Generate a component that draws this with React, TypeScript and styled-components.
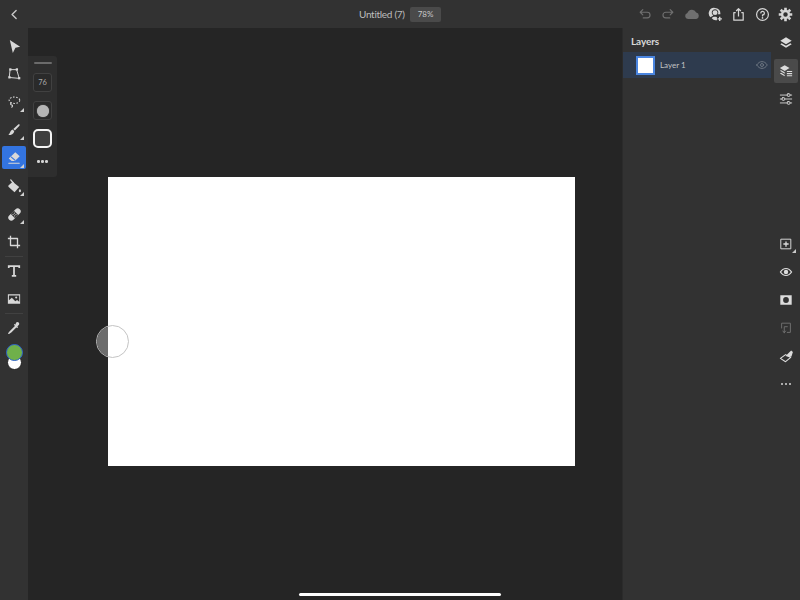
import React from "react";
import styled, { createGlobalStyle } from "styled-components";

const Global = createGlobalStyle`
  html, body { margin: 0; padding: 0; background: #252525; }
  body { font-family: "Lato", "Open Sans", sans-serif; }
  #root { width: 800px; height: 600px; overflow: hidden; }
`;

const Screen = styled.div`
  position: relative;
  width: 800px;
  height: 600px;
  display: flex;
  flex-direction: column;
  overflow: hidden;
  background: #252525;
`;

const TopBar = styled.header`
  height: 28px;
  flex: none;
  display: flex;
  align-items: center;
  background: #323232;
  color: #c8c8c8;
`;

const BackSlot = styled.div`
  width: 28px;
  flex: none;
  display: flex;
  justify-content: center;
  align-items: center;
`;

const TitleGroup = styled.div`
  margin-left: 331px;
  flex: none;
  display: flex;
  align-items: center;
  gap: 6px;
`;

const Title = styled.span`
  font-size: 10px;
  letter-spacing: -0.3px;
  color: #bdbdbd;
  width: 45px;
  white-space: nowrap;
`;

const Zoom = styled.span`
  width: 31px;
  height: 15px;
  background: #4a4a4a;
  border-radius: 2px;
  font-size: 8px;
  line-height: 15px;
  text-align: center;
  color: #c8c8c8;
`;

const TopActions = styled.div`
  margin-left: auto;
  display: flex;
  align-items: center;
  padding-right: 2.5px;
`;

const TopAction = styled.span<{ $dim?: boolean }>`
  width: 23.5px;
  height: 28px;
  display: flex;
  align-items: center;
  justify-content: center;
  color: ${(p) => (p.$dim ? "#6f6f6f" : "#d6d6d6")};
`;

const Body = styled.div`
  flex: 1;
  min-height: 0;
  display: flex;
`;

const LeftRail = styled.nav`
  position: relative;
  z-index: 2;
  width: 28px;
  flex: none;
  box-sizing: border-box;
  padding-top: 4px;
  background: #323232;
  display: flex;
  flex-direction: column;
  align-items: center;
`;

const Tool = styled.button<{ $active?: boolean; $more?: boolean }>`
  position: relative;
  width: 24px;
  height: 28px;
  flex: none;
  padding: 0;
  border: 0;
  background: transparent;
  color: #d8d8d8;
  display: flex;
  align-items: center;
  justify-content: center;

  ${(p) =>
    p.$active &&
    `&::before {
      content: "";
      position: absolute;
      inset: 2px 0 3px 0;
      background: #3374e0;
      border-radius: 2px;
    }`}

  svg { position: relative; }

  ${(p) =>
    p.$more &&
    `&::after {
      content: "";
      position: absolute;
      right: 2px;
      bottom: 4px;
      border-style: solid;
      border-width: 0 0 4px 4px;
      border-color: transparent transparent #d0d0d0 transparent;
    }`}
`;

const RailSep = styled.div`
  width: 18px;
  height: 1px;
  flex: none;
  background: #414141;
`;

const Swatches = styled.div`
  position: relative;
  width: 20px;
  height: 28px;
  margin-top: 2px;
`;

const Swatch = styled.span<{ $color: string; $front?: boolean }>`
  position: absolute;
  left: ${(p) => (p.$front ? 2 : 3)}px;
  top: ${(p) => (p.$front ? 0 : 11)}px;
  box-sizing: border-box;
  width: ${(p) => (p.$front ? 17 : 15)}px;
  height: ${(p) => (p.$front ? 17 : 15)}px;
  border-radius: 50%;
  background: ${(p) => p.$color};
  border: ${(p) => (p.$front ? "1.5px solid #2d62cc" : "1px solid #222")};
  z-index: ${(p) => (p.$front ? 1 : 0)};
`;

const Canvas = styled.main`
  position: relative;
  flex: 1;
  min-width: 0;
  background: #252525;
  box-sizing: border-box;
  padding: 149px 0 0 80px;
`;

const Artboard = styled.div`
  width: 467px;
  height: 289px;
  background: #ffffff;
`;

const FloatPanel = styled.div`
  position: absolute;
  left: 0;
  top: 28px;
  width: 29px;
  height: 121px;
  box-sizing: border-box;
  padding-top: 6px;
  background: #2e2e2e;
  border-radius: 0 3px 3px 0;
  display: flex;
  flex-direction: column;
  align-items: center;
`;

const Handle = styled.span`
  width: 18px;
  height: 2px;
  background: #6b6b6b;
  border-radius: 1px;
`;

const ValueBox = styled.div<{ $top: number }>`
  width: 19px;
  height: 19px;
  margin-top: ${(p) => p.$top}px;
  box-sizing: border-box;
  border: 1px solid #414141;
  border-radius: 3px;
  background: #2a2a2a;
  display: flex;
  align-items: center;
  justify-content: center;
  font-size: 7.5px;
  color: #a8a8a8;
`;

const SoftDot = styled.span`
  width: 12px;
  height: 12px;
  border-radius: 50%;
  background: #b5b5b5;
  box-shadow: 0 0 1px #b5b5b5;
`;

const ShapeBox = styled.div`
  width: 19px;
  height: 19px;
  margin-top: 9px;
  box-sizing: border-box;
  border: 2px solid #f4f4f4;
  border-radius: 5px;
  background: #3f3f3f;
`;

const Dots = styled.div<{ $top: number }>`
  margin-top: ${(p) => p.$top}px;
  display: flex;
  gap: 1.5px;
  span {
    width: 2.5px;
    height: 2.5px;
    border-radius: 50%;
    background: #d4d4d4;
  }
`;

const BrushCursor = styled.div`
  position: absolute;
  left: 68px;
  top: 297px;
  width: 33px;
  height: 33px;
  box-sizing: border-box;
  border-radius: 50%;
  border: 1px solid #c4c4c4;
  overflow: hidden;
  display: flex;
`;

const BrushShade = styled.span`
  width: 11px;
  height: 100%;
  background: #6c6c6c;
`;

const LayersPanel = styled.aside`
  width: 150px;
  flex: none;
  background: #323232;
  border-left: 1px solid #2b2b2b;
  box-sizing: border-box;
  display: flex;
  flex-direction: column;
`;

const PanelTitle = styled.h2`
  margin: 0;
  height: 24px;
  padding-left: 8px;
  font-size: 10px;
  font-weight: 700;
  letter-spacing: -0.1px;
  line-height: 26px;
  color: #d8d8d8;
`;

const LayerRow = styled.div`
  height: 26px;
  margin-right: 1px;
  background: #2e3b4e;
  display: flex;
  align-items: center;
  padding-left: 13px;
  padding-right: 3px;
  color: #c8c8c8;
`;

const Thumb = styled.span`
  width: 19px;
  height: 19px;
  box-sizing: border-box;
  border: 2px solid #4a85e0;
  background: #fff;
  flex: none;
`;

const LayerName = styled.span`
  margin-left: 5px;
  font-size: 8px;
  flex: 1;
  color: #c4c4c4;
`;

const RightRail = styled.nav`
  width: 28px;
  flex: none;
  background: #323232;
  box-sizing: border-box;
  padding-top: 1px;
  display: flex;
  flex-direction: column;
  align-items: center;
`;

const RailBtn = styled.button<{ $active?: boolean; $dim?: boolean; $more?: boolean }>`
  position: relative;
  width: 24px;
  height: 24px;
  margin: 2px 0;
  flex: none;
  padding: 0;
  border: 0;
  border-radius: 2px;
  background: ${(p) => (p.$active ? "#4a4a4a" : "transparent")};
  color: ${(p) => (p.$dim ? "#6f6f6f" : "#dcdcdc")};
  display: flex;
  align-items: center;
  justify-content: center;

  ${(p) =>
    p.$more &&
    `&::after {
      content: "";
      position: absolute;
      right: 2px;
      bottom: 3px;
      border-style: solid;
      border-width: 0 0 4px 4px;
      border-color: transparent transparent #c8c8c8 transparent;
    }`}
`;

const RailGap = styled.div`
  height: 117px;
  flex: none;
`;

const HomeBar = styled.div`
  position: absolute;
  left: 299px;
  bottom: 4px;
  width: 202px;
  height: 3.5px;
  border-radius: 2px;
  background: #fff;
  z-index: 3;
`;

type IP = { s?: number; children: React.ReactNode };
const Ico = ({ s = 14, children }: IP) => (
  <svg width={s} height={s} viewBox="0 0 16 16" fill="none" stroke="currentColor" strokeWidth="1.3" strokeLinecap="round" strokeLinejoin="round">
    {children}
  </svg>
);

const Solid = { fill: "currentColor", stroke: "none" } as const;

export default function App() {
  return (
    <Screen>
      <Global />
      <TopBar>
        <BackSlot>
          <Ico s={13}><path d="M10 3 5 8l5 5" strokeWidth="1.7" /></Ico>
        </BackSlot>
        <TitleGroup>
          <Title>Untitled (7)</Title>
          <Zoom>78%</Zoom>
        </TitleGroup>
        <TopActions>
          <TopAction $dim><Ico><path d="M5.500 3 2.500 6l3 3M3 6h7.500a3 3 0 0 1 0 6.500H6" /></Ico></TopAction>
          <TopAction $dim><Ico><path d="M10.500 3l3 3-3 3M13 6H5.500a3 3 0 0 0 0 6.500H10" /></Ico></TopAction>
          <TopAction $dim>
            <Ico s={16}><path {...Solid} d="M4 13a3 3 0 0 1-.6-5.900A4.800 4.800 0 0 1 12.200 6.400 3.400 3.400 0 0 1 12.300 13z" /></Ico>
          </TopAction>
          <TopAction>
            <Ico s={15}>
              <path {...Solid} fillRule="evenodd" d="M7.500 1a5.700 5.700 0 0 1 5.600 6.700H10.300c.5-.6.700-1.200.7-1.900 0-2-1.500-3.400-3.500-3.400S4 3.800 4 5.800c0 1.200.6 2.200 1.400 2.800v.8c-1.300.4-2.100 1-2.500 1.600A5.700 5.700 0 0 1 7.500 1z" />
              <circle cx="7.500" cy="6" r="2.600" {...Solid} />
              <path d="M12.500 10.500v4.500M10.200 12.700h4.600" strokeWidth="1.500" strokeLinecap="butt" />
              <path {...Solid} d="M4 12c.8-1 2-1.500 3.500-1.500.8 0 1.400.1 2 .4V14A5.500 5.500 0 0 1 4 12z" />
            </Ico>
          </TopAction>
          <TopAction>
            <Ico s={15}><path d="M5 6H3v8h10V6h-2M8 10V2M5.500 4.200 8 1.800l2.500 2.400" strokeLinecap="butt" /></Ico>
          </TopAction>
          <TopAction>
            <Ico s={15}>
              <circle cx="8" cy="8" r="6.300" />
              <path d="M6.200 6.300A1.900 1.900 0 1 1 8 8.500v1" />
              <circle cx="8" cy="11.600" r=".9" {...Solid} />
            </Ico>
          </TopAction>
          <TopAction>
            <Ico s={15}>
              <circle cx="8" cy="8" r="3.700" strokeWidth="2.600" />
              <path strokeWidth="2.800" strokeLinecap="butt" d="M8 .8v2.400M8 12.800v2.400M.8 8h2.400M12.800 8h2.400M2.900 2.900l1.700 1.700M11.400 11.400l1.700 1.700M2.900 13.100l1.700-1.700M11.400 4.600l1.700-1.700" />
            </Ico>
          </TopAction>
        </TopActions>
      </TopBar>

      <Body>
        <LeftRail>
          <Tool><Ico s={15}><path {...Solid} d="M3 1 14 8.200l-5 1.100L6.200 15z" /></Ico></Tool>
          <Tool>
            <Ico s={14}>
              <path d="M4 3h7l3 10-11-1z" strokeWidth="1.100" />
              <rect x="2.500" y="1.500" width="2.600" height="2.600" {...Solid} />
              <rect x="10" y="1.500" width="2.600" height="2.600" {...Solid} />
              <rect x="12.600" y="11.500" width="2.600" height="2.600" {...Solid} />
              <rect x="1.500" y="10.500" width="2.600" height="2.600" {...Solid} />
            </Ico>
          </Tool>
          <Tool $more>
            <Ico s={14}>
              <ellipse cx="8.500" cy="6" rx="6" ry="3.700" strokeDasharray="1.800 1.700" strokeLinecap="butt" />
              <path d="M4.500 9.200c-.8 1.300 0 2.200 1 2.200s1 1.300 0 2.600" />
            </Ico>
          </Tool>
          <Tool $more>
            <Ico s={14}>
              <path {...Solid} d="M14 1.500c.6.400.6 1 .2 1.500L9 8.500 7.200 6.800 12.800 1.700c.4-.4.800-.5 1.200-.2z" />
              <path {...Solid} d="M6.500 7.500 8.300 9.300C7.800 12.200 4.500 14 1.500 13.800 3.500 12.500 3.500 8.500 6.500 7.500z" />
            </Ico>
          </Tool>
          <Tool $active $more>
            <Ico s={14}>
              <path {...Solid} d="M9.500 1.500 14.500 6 9 11.500H5.300L2 8.500z" />
              <path d="M5 7l4 3.500" stroke="#3374e0" />
              <path d="M2 14h12" strokeWidth="1.200" />
            </Ico>
          </Tool>
          <Tool $more>
            <Ico s={15}>
              <path {...Solid} d="M6 3 13 8.500 8 14 1.800 8.500c-.6-.6-.6-1.200 0-1.800z" />
              <path d="M4 1l3 3.500" strokeWidth="1.400" />
              <path {...Solid} d="M13.800 10.500c.7 1 1.200 1.700 1.200 2.400a1.200 1.200 0 0 1-2.400 0c0-.7.500-1.400 1.200-2.400z" />
            </Ico>
          </Tool>
          <Tool $more>
            <Ico s={15}>
              <g transform="rotate(-45 8 8)">
                <rect x="0" y="4.800" width="16" height="6.400" rx="3.200" {...Solid} />
                <rect x="5.600" y="4.800" width="4.800" height="6.400" fill="#323232" stroke="none" />
                <circle cx="7" cy="6.800" r=".6" {...Solid} />
                <circle cx="9" cy="6.800" r=".6" {...Solid} />
                <circle cx="7" cy="9.200" r=".6" {...Solid} />
                <circle cx="9" cy="9.200" r=".6" {...Solid} />
              </g>
            </Ico>
          </Tool>
          <Tool>
            <Ico s={14}><path d="M4 .8V12h11M1 4h11v11" strokeWidth="1.500" strokeLinecap="butt" /></Ico>
          </Tool>
          <RailSep />
          <Tool>
            <Ico s={14}><path d="M2 4.500V2.500h12v2M8 2.500v11M5.500 13.500h5" strokeWidth="2" strokeLinecap="butt" strokeLinejoin="miter" /></Ico>
          </Tool>
          <Tool>
            <Ico s={14}>
              <path {...Solid} fillRule="evenodd" d="M1 2.500h14v11H1zM2.200 4v5.500L5.500 6.500l4 4 2-1.500 2.500 2V4zM10.500 5a1.200 1.200 0 1 1 0 2.400 1.200 1.200 0 0 1 0-2.400z" />
            </Ico>
          </Tool>
          <RailSep />
          <Tool>
            <Ico s={14}>
              <path {...Solid} d="M10.500 1.800c.8-.8 2-.8 2.900 0 .8.900.8 2.100 0 2.900L11.500 6.600 9.400 4.500z" />
              <path d="M8.800 4.300 11.700 7.200M9.800 5.800 3.800 11.800 2 14.200l2.400-1.600 6-6" strokeWidth="1.400" />
            </Ico>
          </Tool>
          <Swatches>
            <Swatch $front $color="#6fb04a" />
            <Swatch $color="#ffffff" />
          </Swatches>
        </LeftRail>

        <Canvas>
          <FloatPanel>
            <Handle />
            <ValueBox $top={9}>76</ValueBox>
            <ValueBox $top={9}><SoftDot /></ValueBox>
            <ShapeBox />
            <Dots $top={12}><span /><span /><span /></Dots>
          </FloatPanel>
          <Artboard />
          <BrushCursor><BrushShade /></BrushCursor>
        </Canvas>

        <LayersPanel>
          <PanelTitle>Layers</PanelTitle>
          <LayerRow>
            <Thumb />
            <LayerName>Layer 1</LayerName>
            <Ico s={12}>
              <g stroke="#6d7682"><path d="M1 8c2-3.200 4.300-4.500 7-4.500S13 4.800 15 8c-2 3.200-4.300 4.500-7 4.500S3 11.200 1 8z" /><circle cx="8" cy="8" r="2" /></g>
            </Ico>
          </LayerRow>
        </LayersPanel>

        <RightRail>
          <RailBtn>
            <Ico s={14}>
              <path {...Solid} d="M8 1.500 14.500 5.500 8 9.500 1.500 5.500z" />
              <path {...Solid} d="M3 8.200 8 11.200l5-3 1.500 1.100L8 13.500 1.500 9.300z" />
            </Ico>
          </RailBtn>
          <RailBtn $active>
            <Ico s={14}>
              <path {...Solid} d="M6.500 1.500 12 4.700 6.500 8 1 4.700z" />
              <path {...Solid} d="M2.500 7 6.500 9.500v1.500L1 7.800zM2.500 10 6.500 12.500v1.500L1 10.800z" />
              <path d="M9 8.500h6M9 11h6M9 13.500h6" strokeWidth="1.200" strokeLinecap="butt" />
            </Ico>
          </RailBtn>
          <RailBtn>
            <Ico s={14}>
              <path d="M1.500 3.500h8M12.500 3.500h2M1.500 8h2M6.500 8h8M1.500 12.500h8M12.500 12.500h2" strokeWidth="1" />
              <rect x="9.500" y="2" width="3" height="3" rx=".8" strokeWidth="1" />
              <rect x="3.500" y="6.500" width="3" height="3" rx=".8" strokeWidth="1" />
              <rect x="9.500" y="11" width="3" height="3" rx=".8" strokeWidth="1" />
            </Ico>
          </RailBtn>
          <RailGap />
          <RailBtn $more>
            <Ico s={14}><rect x="2.500" y="2.500" width="11" height="11" strokeWidth="1.100" /><path d="M8 5v6M5 8h6" strokeWidth="1.500" strokeLinecap="butt" /></Ico>
          </RailBtn>
          <RailBtn>
            <Ico s={14}>
              <path {...Solid} fillRule="evenodd" d="M.8 8C2.800 4.800 5.200 3.300 8 3.300s5.200 1.500 7.200 4.700c-2 3.200-4.400 4.700-7.200 4.700S2.800 11.200.8 8zM2.500 8C4 10.200 5.800 11.300 8 11.300s4-1.100 5.500-3.300C12 5.800 10.200 4.700 8 4.700S4 5.800 2.500 8z" />
              <circle cx="8" cy="8" r="2.500" {...Solid} />
            </Ico>
          </RailBtn>
          <RailBtn>
            <Ico s={14}>
              <path {...Solid} fillRule="evenodd" d="M1.500 2.500h13v11h-13zM8 4.700a3.300 3.300 0 1 0 0 6.600 3.300 3.300 0 0 0 0-6.600z" />
            </Ico>
          </RailBtn>
          <RailBtn $dim>
            <Ico s={14}>
              <path d="M3 2.500h10v10.500H9M3 2.500v6" strokeWidth="1.100" strokeLinecap="butt" />
              <path d="M9.500 6.500H6v7M4.500 11.500 6 13.500l1.500-2" strokeWidth="1.100" />
            </Ico>
          </RailBtn>
          <RailBtn>
            <Ico s={15}>
              <path d="M1.500 10 7 6l5.500 3-5.500 4.500z" strokeWidth="1.200" />
              <path {...Solid} d="M7 7.500 13 1.500l1.800 1.600-1.500 5-2.300.4z" />
            </Ico>
          </RailBtn>
          <RailBtn>
            <Dots $top={0}><span /><span /><span /></Dots>
          </RailBtn>
        </RightRail>
      </Body>
      <HomeBar />
    </Screen>
  );
}
